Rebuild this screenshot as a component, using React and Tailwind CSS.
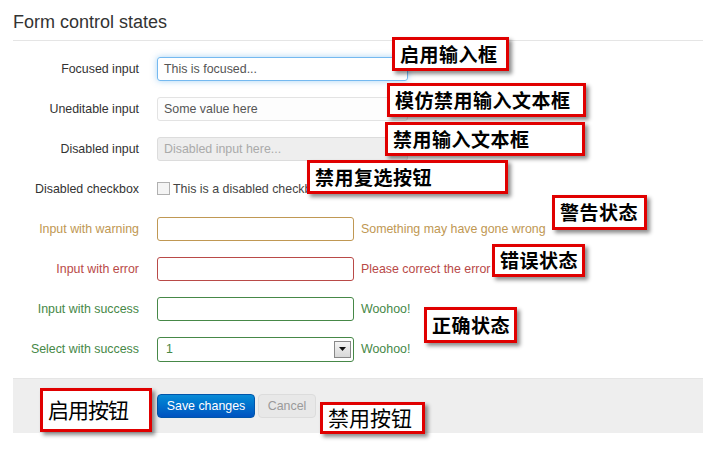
import React from 'react';

const cjk = { fontFamily: '"Noto Sans CJK SC", sans-serif' };

function Note({ className, children, thin }) {
  return (
    <div
      className={`absolute flex items-center bg-white border-[3px] border-[#e00000] pl-[5px] text-black whitespace-nowrap shadow-[3px_3px_4px_rgba(0,0,0,0.45)] ${thin ? 'font-normal' : 'font-bold text-[19px] tracking-[0.5px]'} ${className}`}
      style={cjk}
    >
      {children}
    </div>
  );
}

function Row({ label, labelColor = 'text-[#333]', children }) {
  return (
    <div className="flex items-center h-[40px]">
      <label className={`w-[139px] text-right text-[12.4px] ${labelColor}`}>{label}</label>
      <div className="ml-[18px] flex items-center">{children}</div>
    </div>
  );
}

export default function App() {
  return (
    <div className="relative w-[716px] h-[456px] bg-white overflow-hidden text-[#333]" style={{ fontFamily: '"Liberation Sans", Arial, sans-serif' }}>
      {/* Title */}
      <div className="mx-[13px] pt-[12px] pb-[8px] border-b border-[#e5e5e5]">
        <h2 className="text-[18px] leading-[20px] text-[#333]">Form control states</h2>
      </div>

      {/* Form rows */}
      <div className="pt-[8px]">
        <Row label="Focused input">
          <div className="w-[251px] h-[24px] flex items-center px-[6px] border border-[rgba(82,168,236,0.8)] rounded-[3px] shadow-[0_0_6px_rgba(82,168,236,0.5)] text-[12.4px] text-[#555]">
            This is focused...
          </div>
        </Row>
        <Row label="Uneditable input">
          <div className="w-[251px] h-[24px] flex items-center px-[6px] border border-[#e3e3e3] rounded-[3px] bg-[#fdfdfd] text-[12.4px] text-[#555]">
            Some value here
          </div>
        </Row>
        <Row label="Disabled input">
          <div className="w-[251px] h-[24px] flex items-center px-[6px] border border-[#dcdcdc] rounded-[3px] bg-[#eeeeee] text-[12.4px] text-[#aaa]">
            Disabled input here...
          </div>
        </Row>
        <Row label="Disabled checkbox">
          <div className="flex items-center text-[12.4px] text-[#444]">
            <span className="w-[13px] h-[13px] border border-[#b0b0b0] bg-[#f4f4f4]" />
            <span className="ml-[3px]">This is a disabled checkbox</span>
          </div>
        </Row>
        <Row label="Input with warning" labelColor="text-[#c09853]">
          <div className="w-[197px] h-[24px] border border-[#c09853] rounded-[3px]" />
          <span className="ml-[7px] text-[12.4px] text-[#c09853]">Something may have gone wrong</span>
        </Row>
        <Row label="Input with error" labelColor="text-[#b94a48]">
          <div className="w-[197px] h-[24px] border border-[#b94a48] rounded-[3px]" />
          <span className="ml-[7px] text-[12.4px] text-[#b94a48]">Please correct the error</span>
        </Row>
        <Row label="Input with success" labelColor="text-[#468847]">
          <div className="w-[197px] h-[24px] border border-[#468847] rounded-[3px]" />
          <span className="ml-[7px] text-[12.4px] text-[#468847]">Woohoo!</span>
        </Row>
        <Row label="Select with success" labelColor="text-[#468847]">
          <div className="w-[197px] h-[25px] flex items-center justify-between pl-[8px] pr-[2px] border border-[#468847] rounded-[3px] text-[12.4px] text-[#468847]">
            <span>1</span>
            <span className="w-[17px] h-[17px] flex items-center justify-center border border-[#888] bg-gradient-to-b from-[#f4f4f4] to-[#d8d8d8]">
              <svg width="8" height="5" viewBox="0 0 8 5"><path d="M0 0h7L3.5 4z" fill="#111" /></svg>
            </span>
          </div>
          <span className="ml-[7px] text-[12.4px] text-[#468847]">Woohoo!</span>
        </Row>
      </div>

      {/* Form actions */}
      <div className="mx-[13px] mt-[9px] h-[55px] border-t border-[#e5e5e5] bg-[#eeeeee] flex items-center pl-[144px]">
        <button className="w-[98px] h-[24px] rounded-[4px] border border-[#0055aa] bg-gradient-to-b from-[#0a8bd6] to-[#0052c0] text-white text-[12.4px]">
          Save changes
        </button>
        <button className="ml-[3px] w-[58px] h-[24px] rounded-[4px] border border-[#dcdcdc] bg-[#e8e8e8] text-[#9a9a9a] text-[12.4px]">
          Cancel
        </button>
      </div>

      {/* Annotations */}
      <Note className="left-[392px] top-[37px] w-[117px] h-[34px]">启用输入框</Note>
      <Note className="left-[387px] top-[83px] w-[199px] h-[34px]">模仿禁用输入文本框</Note>
      <Note className="left-[385px] top-[122px] w-[200px] h-[34px]">禁用输入文本框</Note>
      <Note className="left-[307px] top-[160px] w-[201px] h-[34px]">禁用复选按钮</Note>
      <Note className="left-[552px] top-[195px] w-[95px] h-[35px]">警告状态</Note>
      <Note className="left-[492px] top-[244px] w-[93px] h-[33px]">错误状态</Note>
      <Note className="left-[424px] top-[307px] w-[93px] h-[36px]">正确状态</Note>
      <Note thin className="left-[40px] top-[388px] w-[112px] h-[44px] text-[21px] tracking-[-1px]">启用按钮</Note>
      <Note thin className="left-[320px] top-[402px] w-[105px] h-[32px] text-[21px] tracking-[0px]">禁用按钮</Note>
    </div>
  );
}
